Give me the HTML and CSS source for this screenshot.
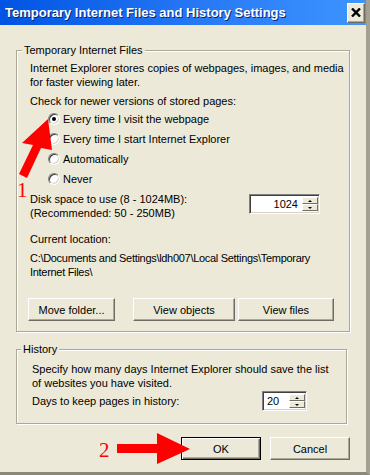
FILE: index.html
```html
<!DOCTYPE html>
<html lang="en">

<head>
  <meta charset="UTF-8">
  <meta name="viewport" content="width=device-width, initial-scale=1.0">
  <title>Temporary Internet Files and History Settings</title>
  <link rel="stylesheet" href="styles.css">
</head>

<body>
  <div class="window">
    <div class="titlebar">
      <span class="title">Temporary Internet Files and History Settings</span>
      <span class="close">
        <svg width="10" height="9" viewBox="0 0 10 9">
          <path d="M1 0.5 L9 8.5 M9 0.5 L1 8.5" stroke="#000" stroke-width="2.4" />
        </svg>
      </span>
    </div>

    <div class="content">
      <fieldset class="group group-files">
        <legend>Temporary Internet Files</legend>
        <div class="group-body">
          <p class="text">Internet Explorer stores copies of webpages, images, and media<br>for faster viewing later.</p>
          <p class="text check-label">Check for newer versions of stored pages:</p>
          <div class="radios">
            <div class="radio-row"><span class="radio checked"></span>Every time I visit the webpage</div>
            <div class="radio-row"><span class="radio"></span>Every time I start Internet Explorer</div>
            <div class="radio-row"><span class="radio"></span>Automatically</div>
            <div class="radio-row"><span class="radio"></span>Never</div>
          </div>
          <div class="disk-row">
            <p class="text">Disk space to use (8 - 1024MB):<br>(Recommended: 50 - 250MB)</p>
            <div class="spinner spinner-disk">
              <span class="spin-value">1024</span>
              <span class="spin-btns">
                <span class="spin-btn"><span class="tri-up"></span></span>
                <span class="spin-btn"><span class="tri-down"></span></span>
              </span>
            </div>
          </div>
          <p class="text loc-label">Current location:</p>
          <p class="text path">C:\Documents and Settings\ldh007\Local Settings\Temporary<br>Internet Files\</p>
          <div class="button-row">
            <button class="btn btn-move">Move folder...</button>
            <button class="btn btn-objects">View objects</button>
            <button class="btn btn-files">View files</button>
          </div>
        </div>
      </fieldset>

      <fieldset class="group group-history">
        <legend>History</legend>
        <div class="group-body">
          <p class="text">Specify how many days Internet Explorer should save the list<br>of websites you have visited.</p>
          <div class="days-row">
            <p class="text">Days to keep pages in history:</p>
            <div class="spinner spinner-days">
              <span class="spin-value">20</span>
              <span class="spin-btns">
                <span class="spin-btn"><span class="tri-up"></span></span>
                <span class="spin-btn"><span class="tri-down"></span></span>
              </span>
            </div>
          </div>
        </div>
      </fieldset>

      <div class="footer">
        <button class="btn btn-default">OK</button>
        <button class="btn">Cancel</button>
      </div>
    </div>

    <!-- red call-outs drawn over the dialog -->
    <svg class="annotations" width="370" height="475" viewBox="0 0 370 475">
      <polygon points="48,119 52,150 41,148 27,178 19,174 33,145 22,143" fill="#ff0000" />
      <text x="17" y="197" class="note-num">1</text>
      <polygon points="117,444 157,444 157,433 190,449 157,464 157,453 117,453" fill="#ff0000" />
      <text x="99" y="457" class="note-num">2</text>
    </svg>
  </div>
</body>

</html>
```

FILE: styles.css
```css
body {
  margin: 0;
  padding: 0;
  background-color: #ece9d8;
  font-family: 'Liberation Sans', Arial, sans-serif;
  font-size: 11px;
  color: #000000;
}

.window {
  position: relative;
  width: 370px;
  height: 475px;
  box-sizing: border-box;
  border-right: 4px solid #a4a192;
  border-bottom: 3px solid #8b887a;
  background-color: #ece9d8;
  overflow: hidden;
}

/* title bar */
.titlebar {
  height: 25px;
  display: flex;
  align-items: center;
  justify-content: space-between;
  padding-left: 5px;
  padding-right: 1px;
  background: linear-gradient(to right, #0054e3, #2a7cf6 60%, #3d95ff);
}

.title {
  color: #FFFFFF;
  font-weight: bold;
  font-size: 13px;
  text-shadow: 1px 1px 0 #0a246a;
}

.close {
  width: 18px;
  height: 20px;
  box-sizing: border-box;
  display: flex;
  align-items: center;
  justify-content: center;
  background-color: #ece9d8;
  border: 1px solid;
  border-color: #ffffff #6f6d63 #6f6d63 #ffffff;
  box-shadow: inset -1px -1px 0 #aca899;
}

.content {
  padding: 18px 0 0 16px;
}

/* group boxes */
.group {
  margin: 0;
  min-width: 0;
  padding: 0 0 0 5px;
  box-sizing: border-box;
  border: 1px solid #aca899;
  box-shadow: 1px 1px 0 #ffffff, inset 1px 1px 0 #ffffff;
}

.group legend {
  padding: 0 2px;
  line-height: 14px;
  background-color: #ece9d8;
}

.group-files {
  width: 334px;
}

.group-files .group-body {
  padding: 4px 15px 10px 8px;
}

.group-history {
  width: 331px;
  margin-top: 10px;
  padding-left: 4px;
}

.group-history .group-body {
  padding: 6px 0 12px 11px;
}

.text {
  margin: 0;
  line-height: 14px;
  white-space: nowrap;
}

.check-label {
  margin-top: 5px;
}

.radios {
  margin-top: 1px;
  padding-left: 18px;
}

.radio-row {
  height: 20px;
  display: flex;
  align-items: center;
  gap: 3px;
}

.radio {
  position: relative;
  width: 12px;
  height: 12px;
  box-sizing: border-box;
  border-radius: 50%;
  background-color: #ffffff;
  border: 1px solid;
  border-color: #808080 #ffffff #ffffff #808080;
  box-shadow: inset 1px 1px 0 #404040, inset -1px -1px 0 #d4d0c8;
}

.radio.checked::after {
  content: "";
  position: absolute;
  left: 3px;
  top: 3px;
  width: 4px;
  height: 4px;
  border-radius: 50%;
  background-color: #000000;
}

.disk-row {
  margin-top: 3px;
  display: flex;
  align-items: flex-start;
}

/* spin boxes */
.spinner {
  display: flex;
  box-sizing: border-box;
  background-color: #ffffff;
  border: 1px solid;
  border-color: #808080 #ffffff #ffffff #808080;
  box-shadow: inset 1px 1px 0 #404040, inset -1px -1px 0 #d4d0c8;
  padding: 2px 1px 2px 2px;
}

.spinner-disk {
  width: 71px;
  height: 20px;
  margin: 2px 14px 0 auto;
}

.spinner-disk .spin-value {
  flex: 1;
  text-align: right;
  padding-right: 4px;
  line-height: 14px;
}

.spinner-days {
  width: 45px;
  height: 20px;
  margin: 0 39px 0 auto;
}

.spinner-days .spin-value {
  flex: 1;
  padding-left: 2px;
  line-height: 14px;
}

.spin-btns {
  width: 16px;
  display: flex;
  flex-direction: column;
  background-color: #ece9d8;
}

.spin-btn {
  flex: 1;
  display: flex;
  align-items: center;
  justify-content: center;
  box-sizing: border-box;
  border: 1px solid;
  border-color: #ffffff #716f64 #716f64 #ffffff;
}

.tri-up {
  width: 0;
  height: 0;
  border-left: 2px solid transparent;
  border-right: 2px solid transparent;
  border-bottom: 2px solid #000000;
}

.tri-down {
  width: 0;
  height: 0;
  border-left: 2px solid transparent;
  border-right: 2px solid transparent;
  border-top: 2px solid #000000;
}

.loc-label {
  margin-top: 12px;
}

.path {
  margin-top: 5px;
  letter-spacing: -0.3px;
}

/* buttons */
.button-row {
  margin: 19px 0 0 -2px;
  display: flex;
}

.btn {
  height: 23px;
  padding: 0;
  font-family: 'Liberation Sans', Arial, sans-serif;
  font-size: 11px;
  color: #000000;
  background-color: #ece9d8;
  border: 1px solid;
  border-color: #ffffff #6f6d63 #6f6d63 #ffffff;
  box-shadow: inset -1px -1px 0 #aca899;
}

.btn-move {
  width: 87px;
}

.btn-objects {
  width: 102px;
  margin-left: 18px;
}

.btn-files {
  width: 96px;
  margin-left: 3px;
}

.days-row {
  margin-top: 1px;
  display: flex;
  align-items: center;
}

.footer {
  margin-top: 13px;
  padding-right: 16px;
  display: flex;
  justify-content: flex-end;
  gap: 9px;
}

.footer .btn {
  width: 80px;
}

.btn-default {
  border: 1px solid #000000;
  box-shadow: inset 1px 1px 0 #ffffff, inset -1px -1px 0 #716f64, inset -2px -2px 0 #aca899;
}

/* red call-outs */
.annotations {
  position: absolute;
  left: 0;
  top: 0;
  pointer-events: none;
}

.note-num {
  font-family: 'Liberation Serif', 'Times New Roman', serif;
  font-size: 21px;
  fill: #ff0000;
}
```
